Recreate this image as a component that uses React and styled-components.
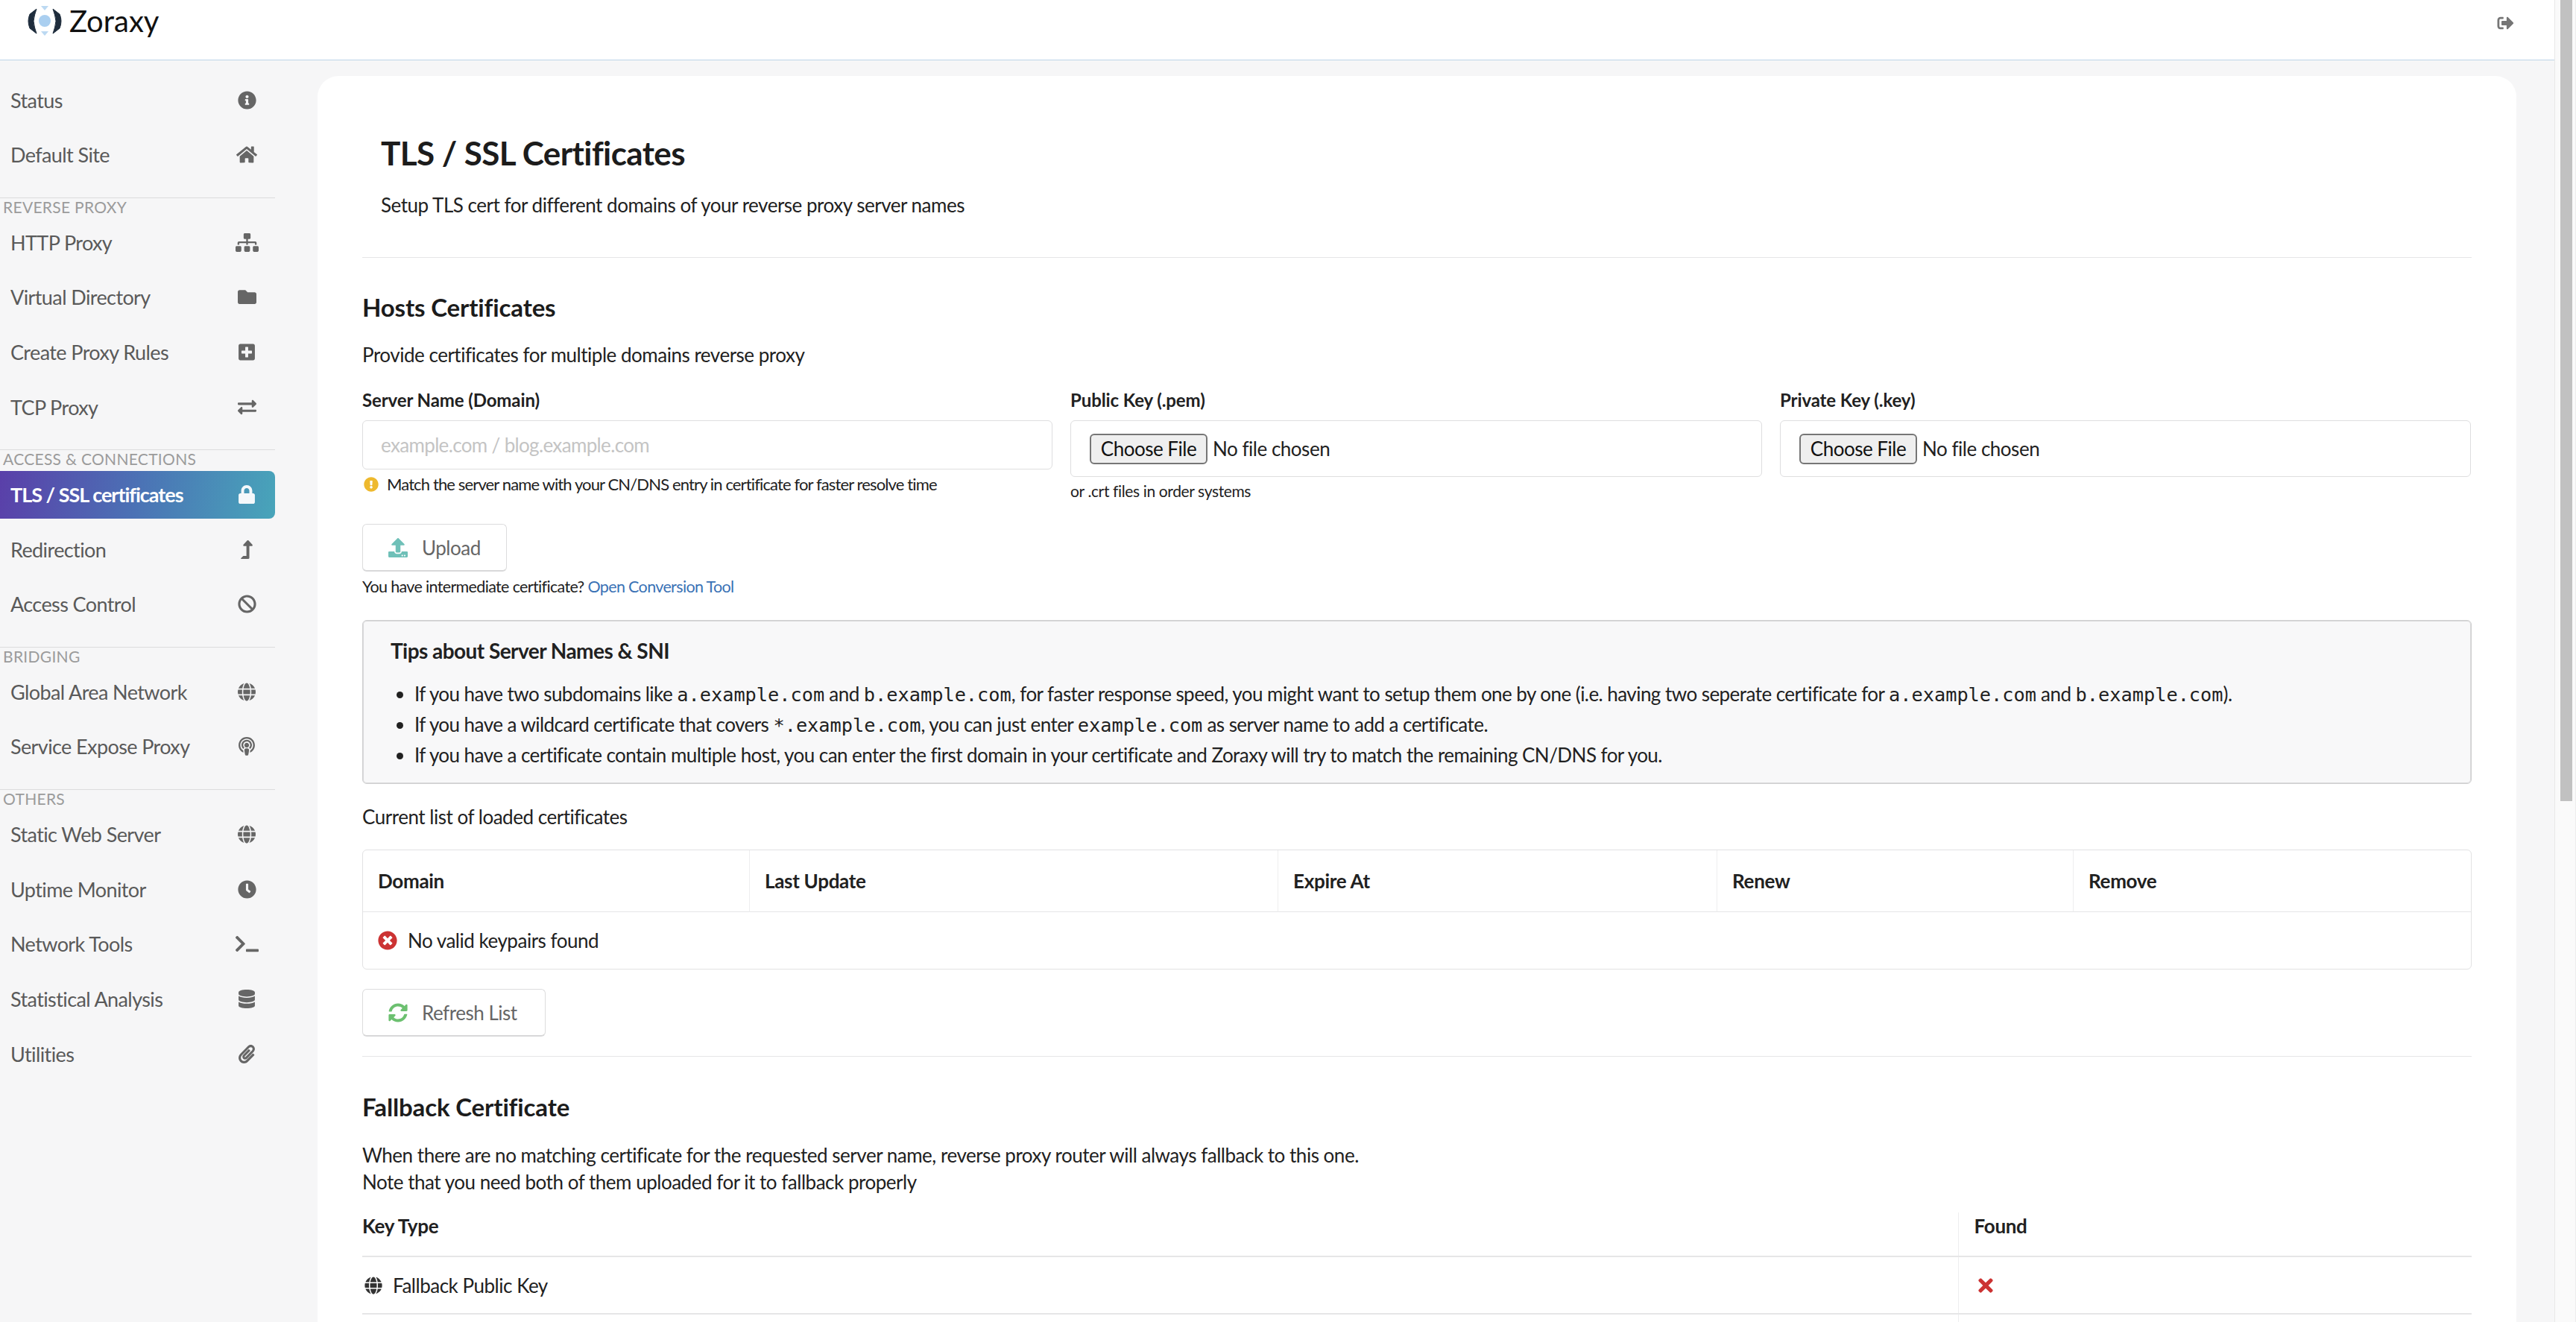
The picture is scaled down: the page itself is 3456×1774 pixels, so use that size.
import styled, { createGlobalStyle } from "styled-components";
import {
  FaBan,
  FaClock,
  FaDatabase,
  FaExchangeAlt,
  FaExclamationCircle,
  FaFolder,
  FaGlobe,
  FaHome,
  FaInfoCircle,
  FaLevelUpAlt,
  FaLock,
  FaPaperclip,
  FaPlusSquare,
  FaPodcast,
  FaSignOutAlt,
  FaSitemap,
  FaSyncAlt,
  FaTerminal,
  FaTimes,
  FaTimesCircle,
  FaUpload,
} from "react-icons/fa";

const GlobalStyle = createGlobalStyle`
  html, body {
    margin: 0;
    padding: 0;
    background: #f6f6f7;
    overflow: hidden;
  }
  * {
    box-sizing: border-box;
  }
`;

const Shell = styled.div`
  display: flex;
  width: 3456px;
  height: 1774px;
  overflow: hidden;
  font-family: "Lato", "Liberation Sans", sans-serif;
  color: #212121;
`;

const Page = styled.div`
  flex: 1;
  min-width: 0;
  display: flex;
  flex-direction: column;
`;

const ScrollTrack = styled.div`
  width: 29px;
  padding: 0 6px 0 7px;
  background: #fafafa;
  border-left: 1px solid #e8e8e8;
  border-right: 1px solid #ececec;
`;

const ScrollThumb = styled.div`
  width: 16px;
  height: 1075px;
  background: #c1c1c1;
`;

const TopBar = styled.header`
  flex: none;
  height: 81px;
  display: flex;
  align-items: flex-start;
  justify-content: space-between;
  background: #fff;
  border-bottom: 1px solid #bcd5e8;
`;

const Brand = styled.div`
  display: flex;
  align-items: flex-start;
  gap: 10px;
  padding: 8px 0 0 37px;
`;

const BrandName = styled.span`
  font-size: 40px;
  line-height: 40px;
  color: #111;
`;

const LogoutIcon = styled.span`
  display: flex;
  margin: 20px 53px 0 0;
  color: #757575;

  svg {
    width: 25px;
    height: 22px;
  }
`;

const Body = styled.div`
  flex: 1;
  min-height: 0;
  display: flex;
`;

const Sidebar = styled.nav`
  flex: none;
  width: 426px;
  padding-top: 21px;
`;

const NavGroup = styled.div`
  width: 369px;
  display: flex;
  flex-direction: column;
  gap: 9.7px;
`;

const NavSection = styled.div`
  width: 369px;
  margin-top: 25px;
  margin-bottom: 1.4px;
  height: 27px;
  padding-left: 4px;
  border-top: 1px solid #dcdcdd;
  font-size: 21px;
  line-height: 23px;
  color: #9b9b9b;
  letter-spacing: 0.3px;
`;

const NavItem = styled.div`
  height: 64px;
  display: flex;
  align-items: center;
  justify-content: space-between;
  padding: 0 13px 0 14px;
  font-size: 27px;
  letter-spacing: ${(p) => (p.$active ? -1 : -0.6)}px;
  font-weight: ${(p) => (p.$active ? 700 : 400)};
  color: ${(p) => (p.$active ? "#fff" : "#5a5a5a")};
  border-radius: 0 8px 8px 0;
  background: ${(p) =>
    p.$active ? "linear-gradient(100deg, #5a3fa9 0%, #4b72b5 50%, #48a5ba 100%)" : "transparent"};
`;

const NavIcon = styled.span`
  width: 50px;
  display: flex;
  align-items: center;
  justify-content: center;
  color: ${(p) => (p.$active ? "#f4f8fb" : "#666")};

  svg {
    flex: none;
    width: ${(p) => p.$w || 25}px;
    height: 25px;
  }
`;

const Panel = styled.main`
  flex: 1;
  min-width: 0;
  margin: 21px 51px 0 0;
  padding: 78px 60px 0;
  background: #fff;
  border-radius: 28px 28px 0 0;
  letter-spacing: -0.48px;
`;

const PageHead = styled.div`
  padding-left: 25px;
`;

const PageTitle = styled.h1`
  margin: 0;
  font-size: 44px;
  line-height: 50px;
  font-weight: 700;
  letter-spacing: -0.6px;
  color: #1c1c1c;
`;

const BodyText = styled.p`
  margin: ${(p) => p.$top || 0}px 0 0;
  font-size: 26px;
  line-height: 36px;
`;

const Rule = styled.hr`
  margin: ${(p) => p.$top}px 0 0;
  height: 1px;
  border: 0;
  background: #e6e6e7;
`;

const SectionTitle = styled.h2`
  margin: ${(p) => p.$top}px 0 0;
  font-size: 33px;
  line-height: 40px;
  font-weight: 700;
  letter-spacing: -0.15px;
  color: #1c1c1c;
`;

const FormGrid = styled.div`
  margin-top: 28px;
  display: grid;
  grid-template-columns: 926px 928px 927px;
  column-gap: 24px;
`;

const FieldLabel = styled.label`
  display: block;
  margin-bottom: 12px;
  font-size: 24px;
  line-height: 30px;
  font-weight: 700;
  letter-spacing: -0.1px;
`;

const TextInput = styled.input`
  display: block;
  width: 100%;
  height: 66px;
  padding: 0 24px;
  font-family: inherit;
  font-size: 26px;
  letter-spacing: -0.65px;
  background: #fff;
  border: 1px solid #dededf;
  border-radius: 6px;
  outline: none;

  &::placeholder {
    color: #c4c4c4;
    opacity: 1;
  }
`;

const Hint = styled.div`
  display: flex;
  align-items: center;
  gap: 11px;
  margin: 8px 0 0 2px;
  font-size: 22px;
  line-height: 24px;
  letter-spacing: -0.87px;

  svg {
    flex: none;
    width: 20px;
    height: 20px;
    color: #eeb92e;
  }
`;

const FileBox = styled.div`
  height: 76px;
  display: flex;
  align-items: center;
  gap: 7px;
  padding: 0 25px;
  font-size: 26px;
  border: 1px solid #dededf;
  border-radius: 6px;
`;

const FileButton = styled.button`
  height: 41px;
  width: 158px;
  padding: 0;
  font-family: inherit;
  font-size: 26px;
  letter-spacing: -0.5px;
  color: #111;
  background: #efefef;
  border: 2px solid #767676;
  border-radius: 6px;
`;

const SmallNote = styled.div`
  margin-top: 7px;
  font-size: 21px;
  line-height: 24px;
  letter-spacing: -0.37px;
`;

const BasicButton = styled.button`
  display: flex;
  align-items: center;
  gap: 19px;
  width: ${(p) => p.$width}px;
  height: 64px;
  margin-top: ${(p) => p.$top}px;
  padding: 0 0 0 34px;
  font-family: inherit;
  font-size: 26px;
  letter-spacing: -0.48px;
  color: #666;
  background: #fff;
  border: 1px solid #dcdcdd;
  border-bottom: 2px solid #d8d8d9;
  border-radius: 6px;

  svg {
    width: 26px;
    height: 26px;
    color: ${(p) => p.$iconColor};
  }
`;

const ConvertNote = styled.div`
  margin-top: 6px;
  font-size: 21.5px;
  line-height: 28px;
  letter-spacing: -0.65px;
`;

const TextLink = styled.a`
  color: #3a72b5;
`;

const TipsBox = styled.section`
  margin-top: 31px;
  height: 220px;
  padding: 23px 37px 0;
  background: #f8f8f9;
  border: 1px solid #cfcfd0;
  border-radius: 6px;
  box-shadow: inset 0 0 0 1px #dadadb;
`;

const TipsTitle = styled.h3`
  margin: 0;
  font-size: 28px;
  line-height: 34px;
  font-weight: 700;
  letter-spacing: -0.55px;
`;

const TipsList = styled.ul`
  margin: 21px 0 0;
  padding: 0 0 0 32px;
  font-size: 26px;
  line-height: 41px;
  letter-spacing: -0.55px;
`;

const Code = styled.code`
  font-family: "DejaVu Sans Mono", "Liberation Mono", monospace;
  font-size: 25.3px;
  line-height: 1;
  letter-spacing: 0;
`;

const CertTable = styled.table`
  width: 100%;
  margin-top: 26px;
  table-layout: fixed;
  border-collapse: separate;
  border-spacing: 0;
  border: 1px solid #e2e2e3;
  border-radius: 6px;
  font-size: 26px;
`;

const HeadCell = styled.th`
  height: 83px;
  padding: 0 20px;
  text-align: left;
  font-weight: 700;
  letter-spacing: -0.3px;
  border-bottom: 1px solid #e6e6e7;
  border-left: ${(p) => (p.$first ? "0" : "1px solid #eeeeef")};
`;

const EmptyCell = styled.td`
  height: 76px;
  padding: 0 20px;
`;

const EmptyMessage = styled.span`
  display: flex;
  align-items: center;
  gap: 14px;

  svg {
    width: 26px;
    height: 26px;
    color: #cc3333;
  }
`;

const KeyTable = styled.table`
  width: 100%;
  margin-top: 23px;
  table-layout: fixed;
  border-collapse: collapse;
  font-size: 26px;
`;

const KeyHead = styled.th`
  height: 59px;
  padding: 2px 21px 0;
  padding-left: ${(p) => (p.$first ? 0 : 21)}px;
  text-align: left;
  vertical-align: top;
  font-size: 26px;
  line-height: 32px;
  font-weight: 700;
  letter-spacing: -0.3px;
  border-bottom: 2px solid #e6e6e7;
  border-left: ${(p) => (p.$first ? "0" : "1px solid #eeeeef")};
`;

const KeyCell = styled.td`
  height: 77px;
  padding: 0 21px;
  padding-left: ${(p) => (p.$first ? 0 : 26)}px;
  border-bottom: 2px solid #e6e6e7;
  border-left: ${(p) => (p.$first ? "0" : "1px solid #eeeeef")};
`;

const KeyName = styled.span`
  display: flex;
  align-items: center;
  gap: 14px;
  padding-left: 3px;

  svg {
    width: 24px;
    height: 24px;
    color: #333;
  }
`;

const CrossIcon = styled.span`
  display: flex;
  color: #cc3333;

  svg {
    width: 20px;
    height: 28px;
  }
`;

function ZoraxyLogo() {
  return (
    <svg width="46" height="40" viewBox="0 0 46 40">
      <path d="M12 4 L3 11 Q-1 20 3 30 L12 37 L9.5 29 Q6.5 20 9.5 12 Z" fill="#1f2d3d" stroke="#1f2d3d" strokeWidth="1" strokeLinejoin="round" />
      <path d="M34 4 L43 11 Q47 20 43 30 L34 37 L36.5 29 Q39.5 20 36.5 12 Z" fill="#1f2d3d" stroke="#1f2d3d" strokeWidth="1" strokeLinejoin="round" />
      <circle cx="23" cy="20" r="8" fill="#aacff0" />
      <path d="M18 0 H28 L23 6 Z" fill="#bcd9f2" />
      <path d="M18 34 H28 L23 40 Z" fill="#bcd9f2" />
    </svg>
  );
}

// w is the drawn width of the icon at 25px height (the FontAwesome glyphs are not all square)
const navGroups = [
  {
    items: [
      { label: "Status", icon: <FaInfoCircle /> },
      { label: "Default Site", icon: <FaHome />, w: 28 },
    ],
  },
  {
    title: "REVERSE PROXY",
    items: [
      { label: "HTTP Proxy", icon: <FaSitemap />, w: 31 },
      { label: "Virtual Directory", icon: <FaFolder /> },
      { label: "Create Proxy Rules", icon: <FaPlusSquare />, w: 22 },
      { label: "TCP Proxy", icon: <FaExchangeAlt /> },
    ],
  },
  {
    title: "ACCESS & CONNECTIONS",
    items: [
      { label: "TLS / SSL certificates", icon: <FaLock />, active: true, w: 22 },
      { label: "Redirection", icon: <FaLevelUpAlt />, w: 16 },
      { label: "Access Control", icon: <FaBan /> },
    ],
  },
  {
    title: "BRIDGING",
    items: [
      { label: "Global Area Network", icon: <FaGlobe />, w: 24 },
      { label: "Service Expose Proxy", icon: <FaPodcast />, w: 22 },
    ],
  },
  {
    title: "OTHERS",
    items: [
      { label: "Static Web Server", icon: <FaGlobe />, w: 24 },
      { label: "Uptime Monitor", icon: <FaClock /> },
      { label: "Network Tools", icon: <FaTerminal />, w: 31 },
      { label: "Statistical Analysis", icon: <FaDatabase />, w: 22 },
      { label: "Utilities", icon: <FaPaperclip />, w: 22 },
    ],
  },
];

const certColumns = [
  { name: "Domain", width: 518 },
  { name: "Last Update", width: 709 },
  { name: "Expire At", width: 589 },
  { name: "Renew", width: 478 },
  { name: "Remove" },
];

function SideNav() {
  return (
    <Sidebar>
      {navGroups.map((group, i) => (
        <div key={i}>
          {group.title && <NavSection>{group.title}</NavSection>}
          <NavGroup>
            {group.items.map((item) => (
              <NavItem key={item.label} $active={item.active}>
                {item.label}
                <NavIcon $active={item.active} $w={item.w}>
                  {item.icon}
                </NavIcon>
              </NavItem>
            ))}
          </NavGroup>
        </div>
      ))}
    </Sidebar>
  );
}

function FileField({ label, note }) {
  return (
    <div>
      <FieldLabel>{label}</FieldLabel>
      <FileBox>
        <FileButton type="button">Choose File</FileButton>
        <span>No file chosen</span>
      </FileBox>
      {note && <SmallNote>{note}</SmallNote>}
    </div>
  );
}

export default function App() {
  return (
    <Shell>
      <GlobalStyle />
      <Page>
        <TopBar>
          <Brand>
            <ZoraxyLogo />
            <BrandName>Zoraxy</BrandName>
          </Brand>
          <LogoutIcon>
            <FaSignOutAlt />
          </LogoutIcon>
        </TopBar>
        <Body>
          <SideNav />
          <Panel>
            <PageHead>
              <PageTitle>TLS / SSL Certificates</PageTitle>
              <BodyText $top={27}>Setup TLS cert for different domains of your reverse proxy server names</BodyText>
            </PageHead>
            <Rule $top={52} />

            <SectionTitle $top={46}>Hosts Certificates</SectionTitle>
            <BodyText $top={26}>Provide certificates for multiple domains reverse proxy</BodyText>
            <FormGrid>
              <div>
                <FieldLabel>Server Name (Domain)</FieldLabel>
                <TextInput placeholder="example.com / blog.example.com" />
                <Hint>
                  <FaExclamationCircle />
                  Match the server name with your CN/DNS entry in certificate for faster resolve time
                </Hint>
              </div>
              <FileField label="Public Key (.pem)" note="or .crt files in order systems" />
              <FileField label="Private Key (.key)" />
            </FormGrid>
            <BasicButton $top={32} $width={194} $iconColor="#6fc0b8">
              <FaUpload />
              Upload
            </BasicButton>
            <ConvertNote>
              You have intermediate certificate? <TextLink>Open Conversion Tool</TextLink>
            </ConvertNote>

            <TipsBox>
              <TipsTitle>Tips about Server Names &amp; SNI</TipsTitle>
              <TipsList>
                <li>
                  If you have two subdomains like <Code>a.example.com</Code> and <Code>b.example.com</Code>, for faster
                  response speed, you might want to setup them one by one (i.e. having two seperate certificate for{" "}
                  <Code>a.example.com</Code> and <Code>b.example.com</Code>).
                </li>
                <li>
                  If you have a wildcard certificate that covers <Code>*.example.com</Code>, you can just enter{" "}
                  <Code>example.com</Code> as server name to add a certificate.
                </li>
                <li>
                  If you have a certificate contain multiple host, you can enter the first domain in your certificate
                  and Zoraxy will try to match the remaining CN/DNS for you.
                </li>
              </TipsList>
            </TipsBox>

            <BodyText $top={26}>Current list of loaded certificates</BodyText>
            <CertTable>
              <colgroup>
                {certColumns.map((col) => (
                  <col key={col.name} width={col.width} />
                ))}
              </colgroup>
              <thead>
                <tr>
                  {certColumns.map((col, i) => (
                    <HeadCell key={col.name} $first={i === 0}>
                      {col.name}
                    </HeadCell>
                  ))}
                </tr>
              </thead>
              <tbody>
                <tr>
                  <EmptyCell colSpan={5}>
                    <EmptyMessage>
                      <FaTimesCircle />
                      No valid keypairs found
                    </EmptyMessage>
                  </EmptyCell>
                </tr>
              </tbody>
            </CertTable>
            <BasicButton $top={26} $width={246} $iconColor="#6cc070">
              <FaSyncAlt />
              Refresh List
            </BasicButton>
            <Rule $top={26} />

            <SectionTitle $top={47}>Fallback Certificate</SectionTitle>
            <BodyText $top={27}>
              When there are no matching certificate for the requested server name, reverse proxy router will always
              fallback to this one.
              <br />
              Note that you need both of them uploaded for it to fallback properly
            </BodyText>
            <KeyTable>
              <colgroup>
                <col width={2141} />
                <col />
              </colgroup>
              <thead>
                <tr>
                  <KeyHead $first>Key Type</KeyHead>
                  <KeyHead>Found</KeyHead>
                </tr>
              </thead>
              <tbody>
                <tr>
                  <KeyCell $first>
                    <KeyName>
                      <FaGlobe />
                      Fallback Public Key
                    </KeyName>
                  </KeyCell>
                  <KeyCell>
                    <CrossIcon>
                      <FaTimes />
                    </CrossIcon>
                  </KeyCell>
                </tr>
                <tr>
                  <KeyCell $first />
                  <KeyCell />
                </tr>
              </tbody>
            </KeyTable>
          </Panel>
        </Body>
      </Page>
      <ScrollTrack>
        <ScrollThumb />
      </ScrollTrack>
    </Shell>
  );
}
